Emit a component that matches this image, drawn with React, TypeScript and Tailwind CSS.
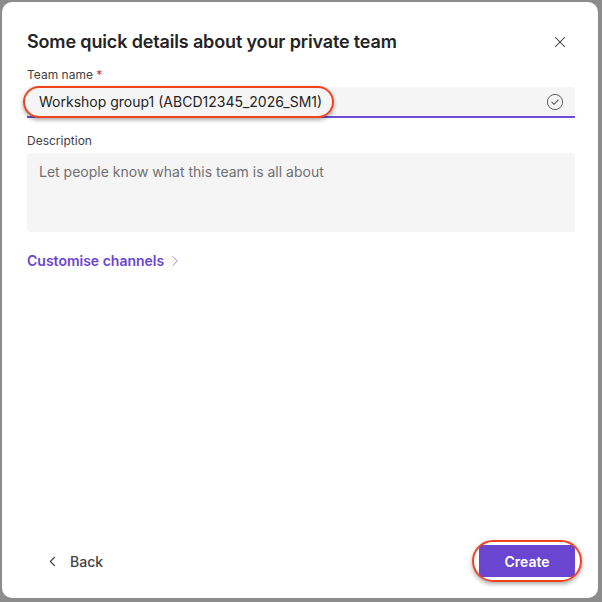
import { X, ChevronRight, ChevronLeft } from 'lucide-react';

// Red pill outline used to call attention to a control
function Highlight({ className }: { className: string }) {
  return (
    <div
      className={`pointer-events-none absolute rounded-full border-[2.5px] border-[#f0421c] shadow-[0_2px_4px_rgba(0,0,0,0.35)] ${className}`}
    />
  );
}

function CheckCircle() {
  return (
    <svg width="18" height="18" viewBox="0 0 18 18" fill="none" className="text-[#616161]">
      <circle cx="9" cy="9" r="7.6" stroke="currentColor" strokeWidth="1" />
      <path d="M5.9 9.2l2.1 2.1 4.1-4.3" stroke="currentColor" strokeWidth="1.1" strokeLinecap="round" strokeLinejoin="round" />
    </svg>
  );
}

export default function App() {
  return (
    <div className="w-[602px] h-[602px] bg-[#8c8c8c] flex pt-[2px] pl-[2px] pr-[4px] pb-[4px] font-['Inter',sans-serif]">
      <div className="relative flex-1 flex flex-col rounded-[10px] bg-white pl-[25px] pr-[23px] pt-[28px] pb-[21px]">
        <div className="flex items-center justify-between">
          <h1 className="text-[18px] leading-6 font-semibold text-[#242424] tracking-[-0.15px]">
            Some quick details about your private team
          </h1>
          <button className="mr-[6px] text-[#333333]">
            <X className="w-[18px] h-[18px]" strokeWidth={1.4} />
          </button>
        </div>

        <label className="mt-[13px] text-[12px] leading-4 text-[#424242]">
          Team name <span className="text-[#c4314b]">*</span>
        </label>
        <div className="relative mt-[4px] h-[31px] flex items-center justify-between rounded-t-[4px] bg-[#f5f5f5] border-b-2 border-[#6b4fd6] pl-[12px] pr-[11px]">
          <span className="text-[14px] text-[#242424]">Workshop group1 (ABCD12345_2026_SM1)</span>
          <CheckCircle />
          <Highlight className="-left-[4px] -top-[1px] w-[311px] h-[32px]" />
        </div>

        <label className="mt-[15px] text-[12px] leading-4 text-[#424242]">Description</label>
        <div className="mt-[4px] h-[79px] rounded-[4px] bg-[#f5f5f5] px-[12px] pt-[6px]">
          <span className="text-[14px] leading-5 text-[#707070]">Let people know what this team is all about</span>
        </div>

        <button className="mt-[19px] self-start flex items-center gap-[2px] text-[14px] leading-5 font-semibold text-[#6a45d2]">
          Customise channels
          <ChevronRight className="w-[18px] h-[18px] text-[#8f80dc]" strokeWidth={1.2} />
        </button>

        <div className="mt-auto flex items-center justify-between">
          <button className="ml-[17px] flex items-center gap-[9px] text-[14px] font-medium text-[#424242]">
            <ChevronLeft className="w-[17px] h-[17px]" strokeWidth={1.5} />
            Back
          </button>
          <div className="relative">
            <button className="w-[96px] h-[32px] rounded-[4px] bg-[#6a45d0] text-[14px] font-semibold text-white">
              Create
            </button>
            <Highlight className="-left-[7px] -top-[5px] w-[110px] h-[42px] rounded-[14px]" />
          </div>
        </div>
      </div>
    </div>
  );
}
